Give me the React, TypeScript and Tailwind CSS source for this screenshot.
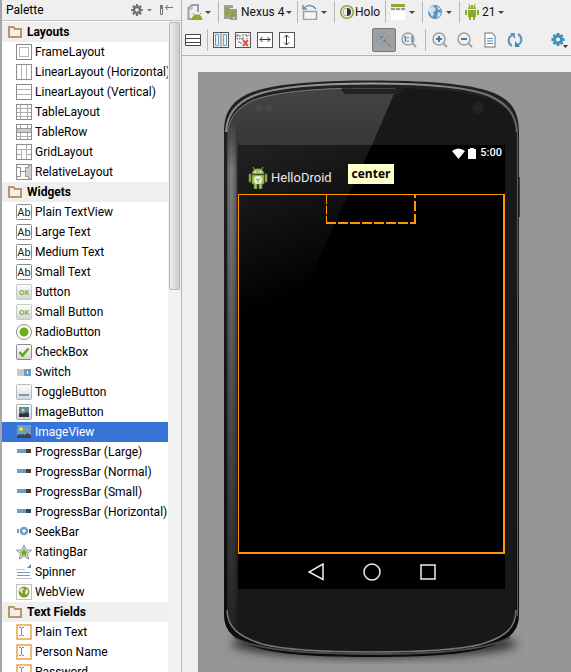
import React from "react";

const G = "#8c8c8c";

type Kind =
  | "frame" | "horizontal" | "vertical" | "table" | "row" | "grid" | "relative"
  | "text" | "button" | "radio" | "check" | "switch" | "toggle" | "imagebutton"
  | "image" | "progress" | "seek" | "star" | "spinner" | "web" | "field";

const groups: { title: string; items: [Kind, string][] }[] = [
  {
    title: "Layouts",
    items: [
      ["frame", "FrameLayout"],
      ["horizontal", "LinearLayout (Horizontal)"],
      ["vertical", "LinearLayout (Vertical)"],
      ["table", "TableLayout"],
      ["row", "TableRow"],
      ["grid", "GridLayout"],
      ["relative", "RelativeLayout"],
    ],
  },
  {
    title: "Widgets",
    items: [
      ["text", "Plain TextView"],
      ["text", "Large Text"],
      ["text", "Medium Text"],
      ["text", "Small Text"],
      ["button", "Button"],
      ["button", "Small Button"],
      ["radio", "RadioButton"],
      ["check", "CheckBox"],
      ["switch", "Switch"],
      ["toggle", "ToggleButton"],
      ["imagebutton", "ImageButton"],
      ["image", "ImageView"],
      ["progress", "ProgressBar (Large)"],
      ["progress", "ProgressBar (Normal)"],
      ["progress", "ProgressBar (Small)"],
      ["progress", "ProgressBar (Horizontal)"],
      ["seek", "SeekBar"],
      ["star", "RatingBar"],
      ["spinner", "Spinner"],
      ["web", "WebView"],
    ],
  },
  {
    title: "Text Fields",
    items: [
      ["field", "Plain Text"],
      ["field", "Person Name"],
      ["field", "Password"],
    ],
  },
];

function Box({ children, fill = "#fff", stroke = G, rx = 0 }: { children?: React.ReactNode; fill?: string; stroke?: string; rx?: number }) {
  return (
    <>
      <rect x="0.5" y="0.5" width="15" height="15" rx={rx} fill={fill} stroke={stroke} />
      {children}
    </>
  );
}

function Picture() {
  return (
    <>
      <circle cx="5" cy="5" r="2" fill="#ffd91a" />
      <path d="M1 14v-2l2-2 2 1 2-1 2 1 2-2 2 1 2 1v3Z" fill="#444" />
    </>
  );
}

function drawKind(kind: Kind) {
  switch (kind) {
    case "frame":
      return <Box><rect x="3.5" y="3.5" width="9" height="9" fill="none" stroke="#b9b9b9" /></Box>;
    case "horizontal":
      return <Box><path d="M5.5 1v14M10.500 1v14" stroke="#b0b0b0" /></Box>;
    case "vertical":
      return <Box><path d="M1 5.500h14M1 10.500h14" stroke="#b0b0b0" /></Box>;
    case "table":
      return <Box><path d="M1 4.500h14M1 8.500h14M1 12.500h14M4.500 1v14M11.500 1v14" stroke="#b0b0b0" /></Box>;
    case "row":
      return (
        <Box>
          <path d="M1 12.500h14M4.500 1v14M11.500 1v14" stroke="#b0b0b0" />
          <path d="M1 4h14v5H1Z" fill="#cacaca" />
          <path d="M1 4.500h14M1 8.500h14" stroke="#999" />
        </Box>
      );
    case "grid":
      return <Box><path d="M1 5.500h14M5.500 5v10M10.500 0v15M1 10.500h4M11 10.500h4" stroke="#b0b0b0" /></Box>;
    case "relative":
      return (
        <Box>
          <path d="M1 3.500h3.500v9H1M5 7.500h5" fill="none" stroke={G} />
          <path d="M9.500 3.500h3V1h3v14h-3v-2.500h-3Z" fill="#ccc" stroke="#999" />
        </Box>
      );
    case "text":
      return (
        <Box rx={1}>
          <text x="8" y="12" textAnchor="middle" fontSize="11" fill="#222" fontFamily="Roboto, sans-serif">Ab</text>
        </Box>
      );
    case "button":
      return (
        <Box fill="url(#btn)" stroke="#c8c8c8" rx={1}>
          <text x="8" y="11" textAnchor="middle" fontSize="7" fontWeight="700" fill="#8aab3c" fontFamily="Open Sans, sans-serif">OK</text>
        </Box>
      );
    case "radio":
      return (
        <>
          <circle cx="8" cy="8" r="7.500" fill="#fff" stroke={G} />
          <circle cx="8" cy="8" r="4.500" fill="#6cb015" />
        </>
      );
    case "check":
      return <Box fill="url(#btn)" rx={1}><path d="m3.500 8 3 3.500 6-7" fill="none" stroke="#5aac22" strokeWidth="2.500" /></Box>;
    case "switch":
      return (
        <>
          <rect x="1" y="5" width="7" height="7" fill="#c8c8c8" />
          <rect x="8" y="5" width="7" height="7" fill="#6b9dc6" />
          <rect x="11" y="7" width="1" height="3" fill="#fff" />
        </>
      );
    case "toggle":
      return <Box fill="url(#btn)" stroke="#bbb" rx={1}><path d="M3 10h10v2H3Z" fill="#6b9dc6" /></Box>;
    case "imagebutton":
      return (
        <Box fill="url(#btn)" stroke="#aaa" rx={1}>
          <rect x="3" y="3" width="10" height="10" fill="#568ab7" />
          <circle cx="7" cy="6" r="1.500" fill="#ffd91a" />
          <path d="M3 13v-3l2-1 2 1 2-1 2-1 2 2v3Z" fill="#333" />
        </Box>
      );
    case "image":
      return (
        <>
          <rect x="1" y="1" width="14" height="13" fill="#6b9dc6" />
          <Picture />
        </>
      );
    case "progress":
      return (
        <>
          <rect x="1" y="5" width="9" height="4" fill="#6b9dc6" />
          <rect x="10" y="5" width="5" height="4" fill="#444" />
        </>
      );
    case "seek":
      return (
        <>
          <rect x="1" y="5" width="2" height="4" fill="#6b9dc6" />
          <rect x="13" y="5" width="2" height="4" fill="#444" />
          <circle cx="8" cy="7" r="3" fill="#fff" stroke="#6b9dc6" strokeWidth="2.500" />
        </>
      );
    case "star":
      return (
        <>
          <path d="m8 1 2 5 5.500.3-4.300 3.500 1.500 5.200L8 12l-4.700 3 1.500-5.200L.5 6.300 6 6Z" fill="#fff" stroke="#888" />
          <path d="m8 4 1.200 3.200 3.300.2-2.600 2 .9 3.100L8 10.700l-2.800 1.800.9-3.100-2.600-2 3.300-.2Z" fill="#58ad18" />
        </>
      );
    case "spinner":
      return (
        <>
          <path d="M0 5.500h9M0 14.500h16" stroke="#c0c0c0" />
          <path d="M1 8.500h13M1 11.500h13" stroke="#6b9dc6" />
          <path d="M15 0v4h-4Z" fill="#4d8ab9" />
        </>
      );
    case "web":
      return (
        <Box stroke="#c0c0c0">
          <circle cx="8" cy="8" r="5.500" fill="#7c9c2c" />
          <path d="m4 5 3-1 1 1-2 2 1 1-1 2-1-2-2-1ZM10 5l2 1v3l-2 2-1-2Z" fill="#e7efcf" />
        </Box>
      );
    case "field":
      return (
        <>
          <rect x="1" y="1" width="14" height="14" fill="#fff" stroke="#e9a24b" strokeWidth="1.500" />
          <path d="M3 3.500h2M6 3.500h2M3 11.500h2M6 11.500h2M5.500 4v7" stroke="#5b93c2" />
        </>
      );
  }
}

function Arrow() {
  return (
    <svg className="h-[3px] w-[6px] shrink-0" viewBox="0 0 6 3" aria-hidden="true">
      <path d="M0 0h6L3 3Z" fill="#34496b" />
    </svg>
  );
}

function Icon({ children, label }: { children: React.ReactNode; label?: string }) {
  return (
    <svg className="size-4 shrink-0" viewBox="0 0 16 16" fill="none" aria-label={label} aria-hidden={label ? undefined : true}>
      {children}
    </svg>
  );
}

function Tool({ label, className, children }: { label: string; className: string; children: React.ReactNode }) {
  return (
    <button type="button" aria-label={label} className={`flex h-6 shrink-0 items-center ${className}`}>
      {children}
    </button>
  );
}

function Sep() {
  return <span className="h-[22px] w-px shrink-0 bg-[#b8b8b8]" />;
}

function Palette() {
  return (
    <aside className="flex h-full w-[182px] shrink-0 flex-col border-r border-l-2 border-r-[#b4b4b4] border-l-[#a6a6a6] bg-[#efefef]">
      <header className="flex h-[21px] shrink-0 items-center border-b border-[#c4c4c4] pr-2 pl-1">
        <h2 className="flex-1 leading-5">Palette</h2>
        <button type="button" aria-label="Palette settings" className="flex items-center gap-1">
          <svg className="size-3" viewBox="0 0 12 12" aria-hidden="true">
            <path d="M6 0v12M0 6h12M1.800 1.800l8.400 8.400M10.200 1.800l-8.400 8.400" stroke="#737373" strokeWidth="2.200" />
            <circle cx="6" cy="6" r="3" fill="#efefef" stroke="#737373" strokeWidth="2.400" />
          </svg>
          <svg className="h-[3px] w-[5px]" viewBox="0 0 5 3" aria-hidden="true"><path d="M0 0h5L2.500 2.500Z" fill="#777" /></svg>
        </button>
        <button type="button" aria-label="Hide palette" className="ml-2">
          <svg className="h-3 w-[13px]" viewBox="0 0 13 12" fill="none" aria-hidden="true">
            <path d="M.5 1.500h2v9h-2ZM5 3.500h8M8 1 5.500 3.500 8 6" stroke="#777" />
            <path d="M0 1h3v4H0Z" fill="#777" />
          </svg>
        </button>
      </header>
      <div className="flex min-h-0 flex-1">
        <div className="min-w-0 flex-1 overflow-hidden bg-white">
          {groups.map((group) => (
            <section key={group.title} className="first:pt-px">
              <h3 className="bg-[#efefef] font-bold">
                <button type="button" className="flex h-5 w-full items-center gap-[5px] pl-[6px]">
                  <svg className="h-3 w-[14px]" viewBox="0 0 14 12" fill="none" aria-hidden="true">
                    <path d="M1 11V1h4.500L7 3h6v8Z" stroke="#bd9560" strokeWidth="2" />
                  </svg>
                  {group.title}
                </button>
              </h3>
              <ul>
                {group.items.map(([kind, label]) => (
                  <li key={label}>
                    <button
                      type="button"
                      className={`flex h-5 w-full items-center gap-[3px] pl-[14px] whitespace-nowrap ${label === "ImageView" ? "bg-[#3874d8] text-white" : ""}`}
                    >
                      <Icon>{drawKind(kind)}</Icon>
                      {label}
                    </button>
                  </li>
                ))}
              </ul>
            </section>
          ))}
        </div>
        <div className="w-[13px] shrink-0 bg-[#f2f2f2] px-px pt-px">
          <div className="h-[268px] rounded-xs border border-[#b5b5b5] bg-linear-to-r from-[#eeeeee] to-[#cccccc]" />
        </div>
      </div>
    </aside>
  );
}

function Magnifier({ children }: { children: React.ReactNode }) {
  return (
    <Icon>
      <circle cx="7" cy="7" r="6" stroke="#a0a0a0" strokeWidth="1.500" />
      <path d="m11 11 4 4" stroke="#a0a0a0" strokeWidth="2" />
      {children}
    </Icon>
  );
}

function Toolbars() {
  return (
    <div className="flex h-14 shrink-0 flex-col gap-1 overflow-hidden border-b border-[#b4b4b4] text-[#111]">
      <div className="flex h-6 items-center">
        <Tool label="Configuration" className="w-9 gap-[2px] pl-[5px]">
          <Icon>
            <path d="M6 15H1.500V4L5 1h6v7" stroke="#a0a0a0" strokeWidth="2" />
            <path d="M5 1v4H1" stroke="#a0a0a0" />
            <path d="M5 16c0-3 2-5 5-5s5 2 5 5ZM6 9l2 3M14 9l-2 3" fill="#8aaa2c" stroke="#8aaa2c" />
          </Icon>
          <Arrow />
        </Tool>
        <Sep />
        <Tool label="Device" className="w-[78px] gap-[2px] pl-1">
          <Icon>
            <path d="M1 1h9v3H7v11H1Z" fill="#a0a0a0" /><path d="M2 3h4v9H2Z" fill="#8aaa2c" />
            <path d="M7 5h7v11H7Z" fill="#999" /><path d="M8 7h5v6H8Z" fill="#8aaa2c" />
            <path d="M10 14h2" stroke="#fff" />
          </Icon>
          <span className="leading-5">Nexus 4</span>
          <Arrow />
        </Tool>
        <Sep />
        <Tool label="Orientation" className="w-9 gap-[3px] pl-1">
          <Icon>
            <path d="M1.500 7.500h13v8h-13Z" fill="#f6f6f6" stroke="#a0a0a0" strokeWidth="1.500" />
            <path d="M2 4c4-4 9-3 12 1M1 1v4h4" stroke="#5b93bd" strokeWidth="1.500" />
          </Icon>
          <Arrow />
        </Tool>
        <Sep />
        <Tool label="Theme" className="w-[50px] pl-1">
          <Icon>
            <circle cx="8" cy="8" r="6.300" fill="#eee" stroke="#8aaa2c" strokeWidth="1.600" />
            <path d="M8 4a4 4 0 0 1 0 8Z" fill="#333" /><path d="M8 4a4 4 0 0 0 0 8" stroke="#aaa" />
          </Icon>
          <span className="leading-5">Holo</span>
        </Tool>
        <Sep />
        <Tool label="Activity" className="w-9 gap-[3px] pl-1">
          <Icon>
            <path d="M1 7h14v9H1Z" fill="#fff" /><path d="M1 0h14v3H1Z" fill="#8aaa2c" />
            <path d="M1 5h4M6 5h4M11 5h4" stroke="#999" strokeWidth="2" />
          </Icon>
          <Arrow />
        </Tool>
        <Sep />
        <Tool label="Language" className="w-9 gap-[3px] pl-1">
          <Icon>
            <circle cx="8" cy="8" r="7" fill="#5f94c0" />
            <path d="m2 4 4-2 2 2 1 2-3 2 1 2-2 3-2-4-2-2ZM10 2l4 3-3 1ZM11 8l3 1-1 3-3 2Z" fill="#d5e2ed" />
          </Icon>
          <Arrow />
        </Tool>
        <Sep />
        <Tool label="Android version" className="gap-[2px] pl-1">
          <Icon>
            <path d="M4 5c0-5 8-5 8 0ZM4 6h8v7h-1v3H9v-3H7v3H5v-3H4ZM1 6h2v5H1ZM13 6h2v5h-2Z" fill="#8aaa2c" />
            <path d="m5 0 1 2M11 0l-1 2" stroke="#8aaa2c" /><path d="M6 3h1M9 3h1" stroke="#fff" />
          </Icon>
          <span className="leading-5">21</span>
          <Arrow />
        </Tool>
      </div>
      <div className="flex h-6 items-center">
        <Tool label="Rows" className="pr-[6px] pl-[3px]">
          <Icon><path d="M.5 2.500h15v11H.5ZM1 6.500h14M1 10.500h14" fill="#fff" stroke="#444" /></Icon>
        </Tool>
        <Sep />
        <Tool label="Columns" className="ml-[2px] w-[22px] justify-center">
          <Icon>
            <Box stroke="#555" fill="#eee"><path d="M2.500 2.500h3v11h-3ZM10.500 2.500h3v11h-3Z" fill="#e2edf5" stroke="#6d9fc4" /><path d="M8 1v14" stroke="#777" /></Box>
          </Icon>
        </Tool>
        <Tool label="Clear weights" className="w-[22px] justify-center">
          <Icon>
            <Box stroke="#555" fill="#f5f5f5">
              <path d="M2 3h3v4H2ZM8 2v5M6 7h3M10 3h4M12 3v4M3 10h3v3" stroke="#666" strokeDasharray="2 1" />
              <path d="m8 8 5 6M13 8l-5 6" stroke="#dd5148" strokeWidth="2" />
            </Box>
          </Icon>
        </Tool>
        <Tool label="Fill width" className="w-[22px] justify-center">
          <Icon><Box stroke="#555"><path d="M3 7.500h10M5.500 5 3 7.500 5.500 10M10.500 5 13 7.500 10.500 10" stroke="#333" /></Box></Icon>
        </Tool>
        <Tool label="Fill height" className="w-[22px] justify-center">
          <Icon><Box stroke="#555"><path d="M7.500 3v10M5 5.500 7.500 3 10 5.500M5 10.500 7.500 13l2.500-2.500" stroke="#333" /></Box></Icon>
        </Tool>
        <span className="flex-1" />
        <Tool label="Zoom to fit" className="w-6 justify-center rounded-xs border border-[#777] bg-[#a0a0a0]">
          <Icon>
            <circle cx="7" cy="7" r="6" stroke="#8d999f" /><path d="m11 11 4 4" stroke="#8c8c8c" strokeWidth="2" />
            <path d="M4 8V4h4Z" fill="#518fbd" /><path d="M10 6v4H6Z" fill="#518fbd" />
          </Icon>
        </Tool>
        <Tool label="Actual size" className="mr-[7px] ml-1 w-[18px] justify-center">
          <Magnifier><path d="M3 5h1.500v5M10 5h1v5M7 5v1.500M7 8.500V10" stroke="#4c8cba" strokeWidth="1.500" /></Magnifier>
        </Tool>
        <Sep />
        <Tool label="Zoom in" className="ml-[3px] w-[22px] justify-center">
          <Magnifier><path d="M7 4v6M4 7h6" stroke="#3b80b4" strokeWidth="2" /></Magnifier>
        </Tool>
        <Tool label="Zoom out" className="ml-[3px] w-[22px] justify-center">
          <Magnifier><path d="M4 7h6" stroke="#3b80b4" strokeWidth="2" /></Magnifier>
        </Tool>
        <Tool label="Show log" className="ml-[3px] w-[22px] justify-center">
          <Icon><path d="M3 1h7l3 3v11H3Z" fill="#fff" stroke="#a0a0a0" strokeWidth="1.500" /><path d="M5 6.500h6M5 9h6M5 11.500h6" stroke="#4c8cba" /></Icon>
        </Tool>
        <Tool label="Refresh" className="ml-[3px] w-[22px] justify-center">
          <Icon>
            <path d="M5 14C0 11 1 4 6 3M11 2c5 3 4 10-1 11" stroke="#6398c3" strokeWidth="2.200" />
            <path d="M3 1h5v6Z" fill="#6398c3" /><path d="M13 15H8V9Z" fill="#2f8abb" />
          </Icon>
        </Tool>
        <Tool label="Settings" className="mr-px ml-6 w-5 justify-center">
          <svg className="h-4 w-[18px]" viewBox="0 0 18 16" fill="none" aria-hidden="true">
            <path d="M7 1v13M.5 7.500h13M2.500 3l9 9M11.500 3l-9 9" stroke="#3f8fc0" strokeWidth="2.800" />
            <circle cx="7" cy="7.500" r="3.500" fill="#efefef" stroke="#3f8fc0" strokeWidth="2.800" />
            <path d="M12 13h5l-2.500 3Z" fill="#333" />
          </svg>
        </Tool>
      </div>
    </div>
  );
}

const BODY =
  "M0 52C0 30 10 20 26 13C50 3 100 .5 148 .5S246 3 270 13C286 20 295 30 295 52V535C295 552 283 562 261 568C235 576 186 577 148 577S60 576 34 568C12 562 0 552 0 535Z";
const FACE =
  "M3 58C4 36 14 26 30 19C54 10 104 8 148 8S242 10 266 19C282 26 291 36 292 58V530C292 547 280 557 258 563C232 571 186 572 148 572S64 571 38 563C14 557 3 547 3 530Z";

function PhoneFrame() {
  return (
    <svg className="absolute top-0 left-0 h-[590px] w-[310px]" viewBox="0 0 310 590" fill="none" aria-hidden="true">
      <defs>
        <linearGradient id="rim" x1="0" y1="0" x2="0" y2="1">
          <stop offset="0" stopColor="#222" /><stop offset="1" stopColor="#0b0b0b" />
        </linearGradient>
        <linearGradient id="rail" x1="0" y1="0" x2="14" y2="0" gradientUnits="userSpaceOnUse">
          <stop offset="0" stopColor="#333" /><stop offset=".2" stopColor="#555" /><stop offset=".5" stopColor="#808080" /><stop offset=".8" stopColor="#666" /><stop offset="1" stopColor="#222" />
        </linearGradient>
        <linearGradient id="railFade" x1="0" y1="40" x2="0" y2="545" gradientUnits="userSpaceOnUse">
          <stop offset="0" stopColor="#000" /><stop offset=".1" stopColor="#fff" /><stop offset=".5" stopColor="#999" /><stop offset="1" stopColor="#222" />
        </linearGradient>
        <mask id="railMask"><rect width="310" height="590" fill="url(#railFade)" /></mask>
        <linearGradient id="glare" x1="0" y1="0" x2="0" y2="200" gradientUnits="userSpaceOnUse">
          <stop offset="0" stopColor="#464646" /><stop offset=".35" stopColor="#363636" /><stop offset="1" stopColor="#181818" />
        </linearGradient>
        <linearGradient id="topEdge" x1="0" y1="0" x2="295" y2="0" gradientUnits="userSpaceOnUse">
          <stop offset="0" stopColor="#888" /><stop offset=".5" stopColor="#a0a0a0" /><stop offset="1" stopColor="#666" />
        </linearGradient>
        <clipPath id="face"><path d={FACE} /></clipPath>
        <filter id="soft" x="-20%" y="-20%" width="140%" height="140%"><feGaussianBlur stdDeviation="5" /></filter>
      </defs>
      <ellipse cx="150" cy="564" rx="143" ry="14" fill="#333" filter="url(#soft)" />
      <rect x="294" y="97" width="2" height="40" fill="#3a3a3a" />
      <path d={BODY} fill="url(#rim)" />
      <path d="M2 52C3 34 12 23 29 16C53 6 104 3.500 148 3.500S242 6 266 16C283 24 292 34 293 52" stroke="url(#topEdge)" strokeWidth="2" />
      <path d="M293.500 50V536" stroke="#5c5c5c" />
      <path d={FACE} fill="#181818" />
      <g clipPath="url(#face)">
        <path d="M0 0H176L148 65L109 150L80 215H0Z" fill="url(#glare)" />
        <rect width="14" height="590" fill="url(#rail)" mask="url(#railMask)" />
      </g>
      <path d="M3.500 52C5 38 14 27 30 20C54 11 104 8.500 118 8.500" stroke="#777" />
      <path d="M3 530C3 548 16 557 38 564C64 571 110 572 148 572S232 571 258 564C281 557 292 548 292 530" stroke="#777" strokeWidth="1.500" />
      <path d="M10 557C24 567 66 574 148 574S270 567 286 557" stroke="#4a4a4a" strokeWidth="2" />
      <path d="M116 9H182L174 14H121Z" fill="#222" />
      <circle cx="35" cy="28" r="4" fill="#484848" /><circle cx="45" cy="28" r="4" fill="#484848" />
      <circle cx="254" cy="28" r="6" fill="#222226" /><circle cx="253" cy="28" r="1.500" fill="#29294b" />
    </svg>
  );
}

function Phone() {
  return (
    <div className="relative h-[590px] w-[296px] pt-[65px] pl-[14px]">
      <PhoneFrame />
      <div className="relative w-[267px] bg-black font-[Roboto,sans-serif] text-white">
        <svg className="absolute inset-0 h-[210px] w-full" viewBox="0 0 267 210" aria-hidden="true">
          <defs>
            <linearGradient id="sheen" x1="0" y1="0" x2="60" y2="150" gradientUnits="userSpaceOnUse">
              <stop offset="0" stopColor="#222" /><stop offset=".5" stopColor="#121212" /><stop offset="1" stopColor="#000" />
            </linearGradient>
          </defs>
          <path d="M0 0H134L94 85L40 205H0Z" fill="url(#sheen)" />
        </svg>
        <div className="relative flex h-4 items-center justify-end gap-1 pr-[3px] text-[11px] leading-4 font-medium">
          <svg className="h-[11px] w-[24px]" viewBox="0 0 24 11" fill="#fff" aria-label="Wi-Fi and battery">
            <path d="M0 3Q6.500-2 13 3L6.500 11ZM16 1h2V0h4v1h2v10h-8Z" />
          </svg>
          <span>5:00</span>
        </div>
        <div className="relative flex h-[33px] items-center gap-[3px] pl-[10px] text-[13px]">
          <svg className="h-[22px] w-5" viewBox="0 0 20 22" aria-hidden="true">
            <path d="M4 7C4 0 16 0 16 7ZM4 8h12v9h-2v5h-3v-5H9v5H6v-5H4ZM1 7h2v8H1ZM17 7h2v8h-2Z" fill="#9fc35b" stroke="#5b792a" strokeWidth=".7" />
            <path d="m5 0 2 3M15 0l-2 3" stroke="#9fc35b" /><circle cx="7.500" cy="5" r=".8" fill="#fff" /><circle cx="12.500" cy="5" r=".8" fill="#fff" />
            <circle cx="10" cy="13" r="4" fill="#e7f0dc" /><path d="m8 12 2 1 2-1M10 13v3" stroke="#7b9b57" fill="none" />
          </svg>
          <span className="text-[#e8e8e8]">HelloDroid</span>
          <span role="tooltip" className="absolute top-[3px] left-[110px] flex h-5 w-[46px] items-center justify-center bg-[#ffffcc] font-['Open_Sans',sans-serif] text-xs font-bold text-black">
            center
          </span>
        </div>
        <div className="relative flex h-[360px] justify-center border border-r-2 border-b-2 border-[#ff9800]">
          <svg className="-mt-px mr-px h-[30px] w-[90px]" viewBox="0 0 90 30" fill="none" stroke="#ff9800" aria-hidden="true">
            <path d="M.5 1v28" strokeDasharray="9 1.500" />
            <path d="M0 29h90" strokeWidth="2" strokeDasharray="10 2" />
            <path d="M89 30V0" strokeWidth="2" strokeDasharray="10 3" />
          </svg>
        </div>
        <nav className="relative flex h-[35px] items-center justify-center gap-[39px]">
          <button type="button" aria-label="Back"><svg className="h-[18px] w-4" viewBox="0 0 16 18" fill="none"><path d="M15 1v15.500L1 9Z" stroke="#eee" strokeWidth="1.500" /></svg></button>
          <button type="button" aria-label="Home"><svg className="size-[18px]" viewBox="0 0 18 18" fill="none"><circle cx="9" cy="9" r="8" stroke="#eee" strokeWidth="1.500" /></svg></button>
          <button type="button" aria-label="Recent apps"><svg className="size-4" viewBox="0 0 16 16" fill="none"><path d="M1 1h14v14H1Z" stroke="#eee" strokeWidth="1.500" /></svg></button>
        </nav>
      </div>
    </div>
  );
}

export default function App() {
  return (
    <div className="flex h-screen w-full overflow-hidden bg-[#efefef] font-[Roboto,sans-serif] text-xs text-black">
      <svg className="absolute size-0" aria-hidden="true">
        <defs>
          <linearGradient id="btn" x1="0" y1="0" x2="0" y2="1">
            <stop offset="0" stopColor="#fff" /><stop offset="1" stopColor="#d4d4d4" />
          </linearGradient>
        </defs>
      </svg>
      <Palette />
      <main className="flex min-w-0 flex-1 flex-col">
        <Toolbars />
        <div className="min-h-0 flex-1 overflow-hidden pt-4 pl-4">
          <div className="h-full overflow-hidden bg-[#969696] pt-2 pl-[26px]">
            <Phone />
          </div>
        </div>
      </main>
    </div>
  );
}
